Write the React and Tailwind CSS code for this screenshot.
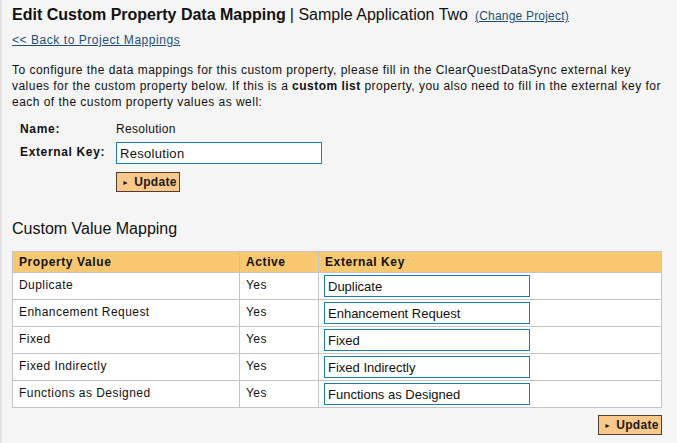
import React from 'react';

const rows = [
    'Duplicate',
    'Enhancement Request',
    'Fixed',
    'Fixed Indirectly',
    'Functions as Designed',
];

const UpdateButton = () => (
    <button className="flex items-center h-[20px] w-[64px] pl-[5px] border border-[#4d4030] bg-[#f9c88a] text-[12px] font-bold tracking-[0.3px] text-[#1a1a1a] leading-none">
        <span className="text-[7px] mr-[5px]">&#9658;</span>
        Update
    </button>
);

const App = () => {
    return (
        <div className="flex w-[677px] h-[443px] bg-[#f5f5f5] font-['Liberation_Sans',Arial,sans-serif] text-[#111] overflow-hidden">
            <div className="w-[2px] bg-[#e6e1e1]" />
            <div className="flex-1 pl-[10px] pr-[13px]">
                <div className="flex items-baseline h-[30px] pt-[6px] text-[16px] leading-[18px]">
                    <span className="font-bold">Edit Custom Property Data Mapping</span>
                    <span className="ml-[4px]">| Sample Application Two</span>
                    <a href="#" className="ml-[7px] text-[12px] tracking-[0.2px] text-[#1f4f75] underline">(Change Project)</a>
                </div>
                <a href="#" className="block mt-[2px] text-[12px] leading-[16px] tracking-[0.55px] text-[#1f4f75] underline">&lt;&lt; Back to Project Mappings</a>
                <p className="mt-[14px] text-[12px] leading-[16px] tracking-[0.47px]">
                    To configure the data mappings for this custom property, please fill in the ClearQuestDataSync external key values for the custom property below. If this is a <b>custom list</b> property, you also need to fill in the external key for each of the custom property values as well:
                </p>
                <div className="mt-[8px] ml-[8px] text-[12px] tracking-[0.3px]">
                    <div className="flex items-center h-[22px]">
                        <div className="w-[96px] font-bold tracking-[0.7px]">Name:</div>
                        <div>Resolution</div>
                    </div>
                    <div className="flex items-start mt-[2px]">
                        <div className="w-[96px] font-bold tracking-[0.65px] pt-[1px]">External Key:</div>
                        <div>
                            <input
                                defaultValue="Resolution"
                                className="w-[206px] h-[22px] px-[3px] bg-white border border-[#1b80a8] text-[13px] outline-none"
                            />
                            <div className="mt-[8px]">
                                <UpdateButton />
                            </div>
                        </div>
                    </div>
                </div>
                <h2 className="mt-[28px] text-[16px] leading-[18px]">Custom Value Mapping</h2>
                <table className="mt-[13px] w-[650px] border-collapse text-[12px]">
                    <thead>
                        <tr className="bg-[#f7c86f] h-[21px]">
                            <th className="w-[227px] border border-[#c4c4c4] text-left font-bold tracking-[0.6px] pl-[6px]">Property Value</th>
                            <th className="w-[79px] border border-[#c4c4c4] text-left font-bold tracking-[0.6px] pl-[6px]">Active</th>
                            <th className="border border-[#c4c4c4] text-left font-bold tracking-[0.6px] pl-[6px]">External Key</th>
                        </tr>
                    </thead>
                    <tbody>
                        {rows.map((row) => (
                            <tr key={row} className="bg-white h-[27px]">
                                <td className="border border-[#c4c4c4] align-top pl-[6px] pt-[3px] tracking-[0.45px]">{row}</td>
                                <td className="border border-[#c4c4c4] align-top pl-[6px] pt-[3px] tracking-[0.45px]">Yes</td>
                                <td className="border border-[#c4c4c4] align-top pl-[5px] pt-[2px]">
                                    <input
                                        defaultValue={row}
                                        className="block w-[206px] h-[22px] px-[3px] bg-white border border-[#1b80a8] text-[13px] outline-none"
                                    />
                                </td>
                            </tr>
                        ))}
                    </tbody>
                </table>
                <div className="flex justify-end w-[650px] mt-[7px]">
                    <UpdateButton />
                </div>
            </div>
        </div>
    );
};

export default App;
